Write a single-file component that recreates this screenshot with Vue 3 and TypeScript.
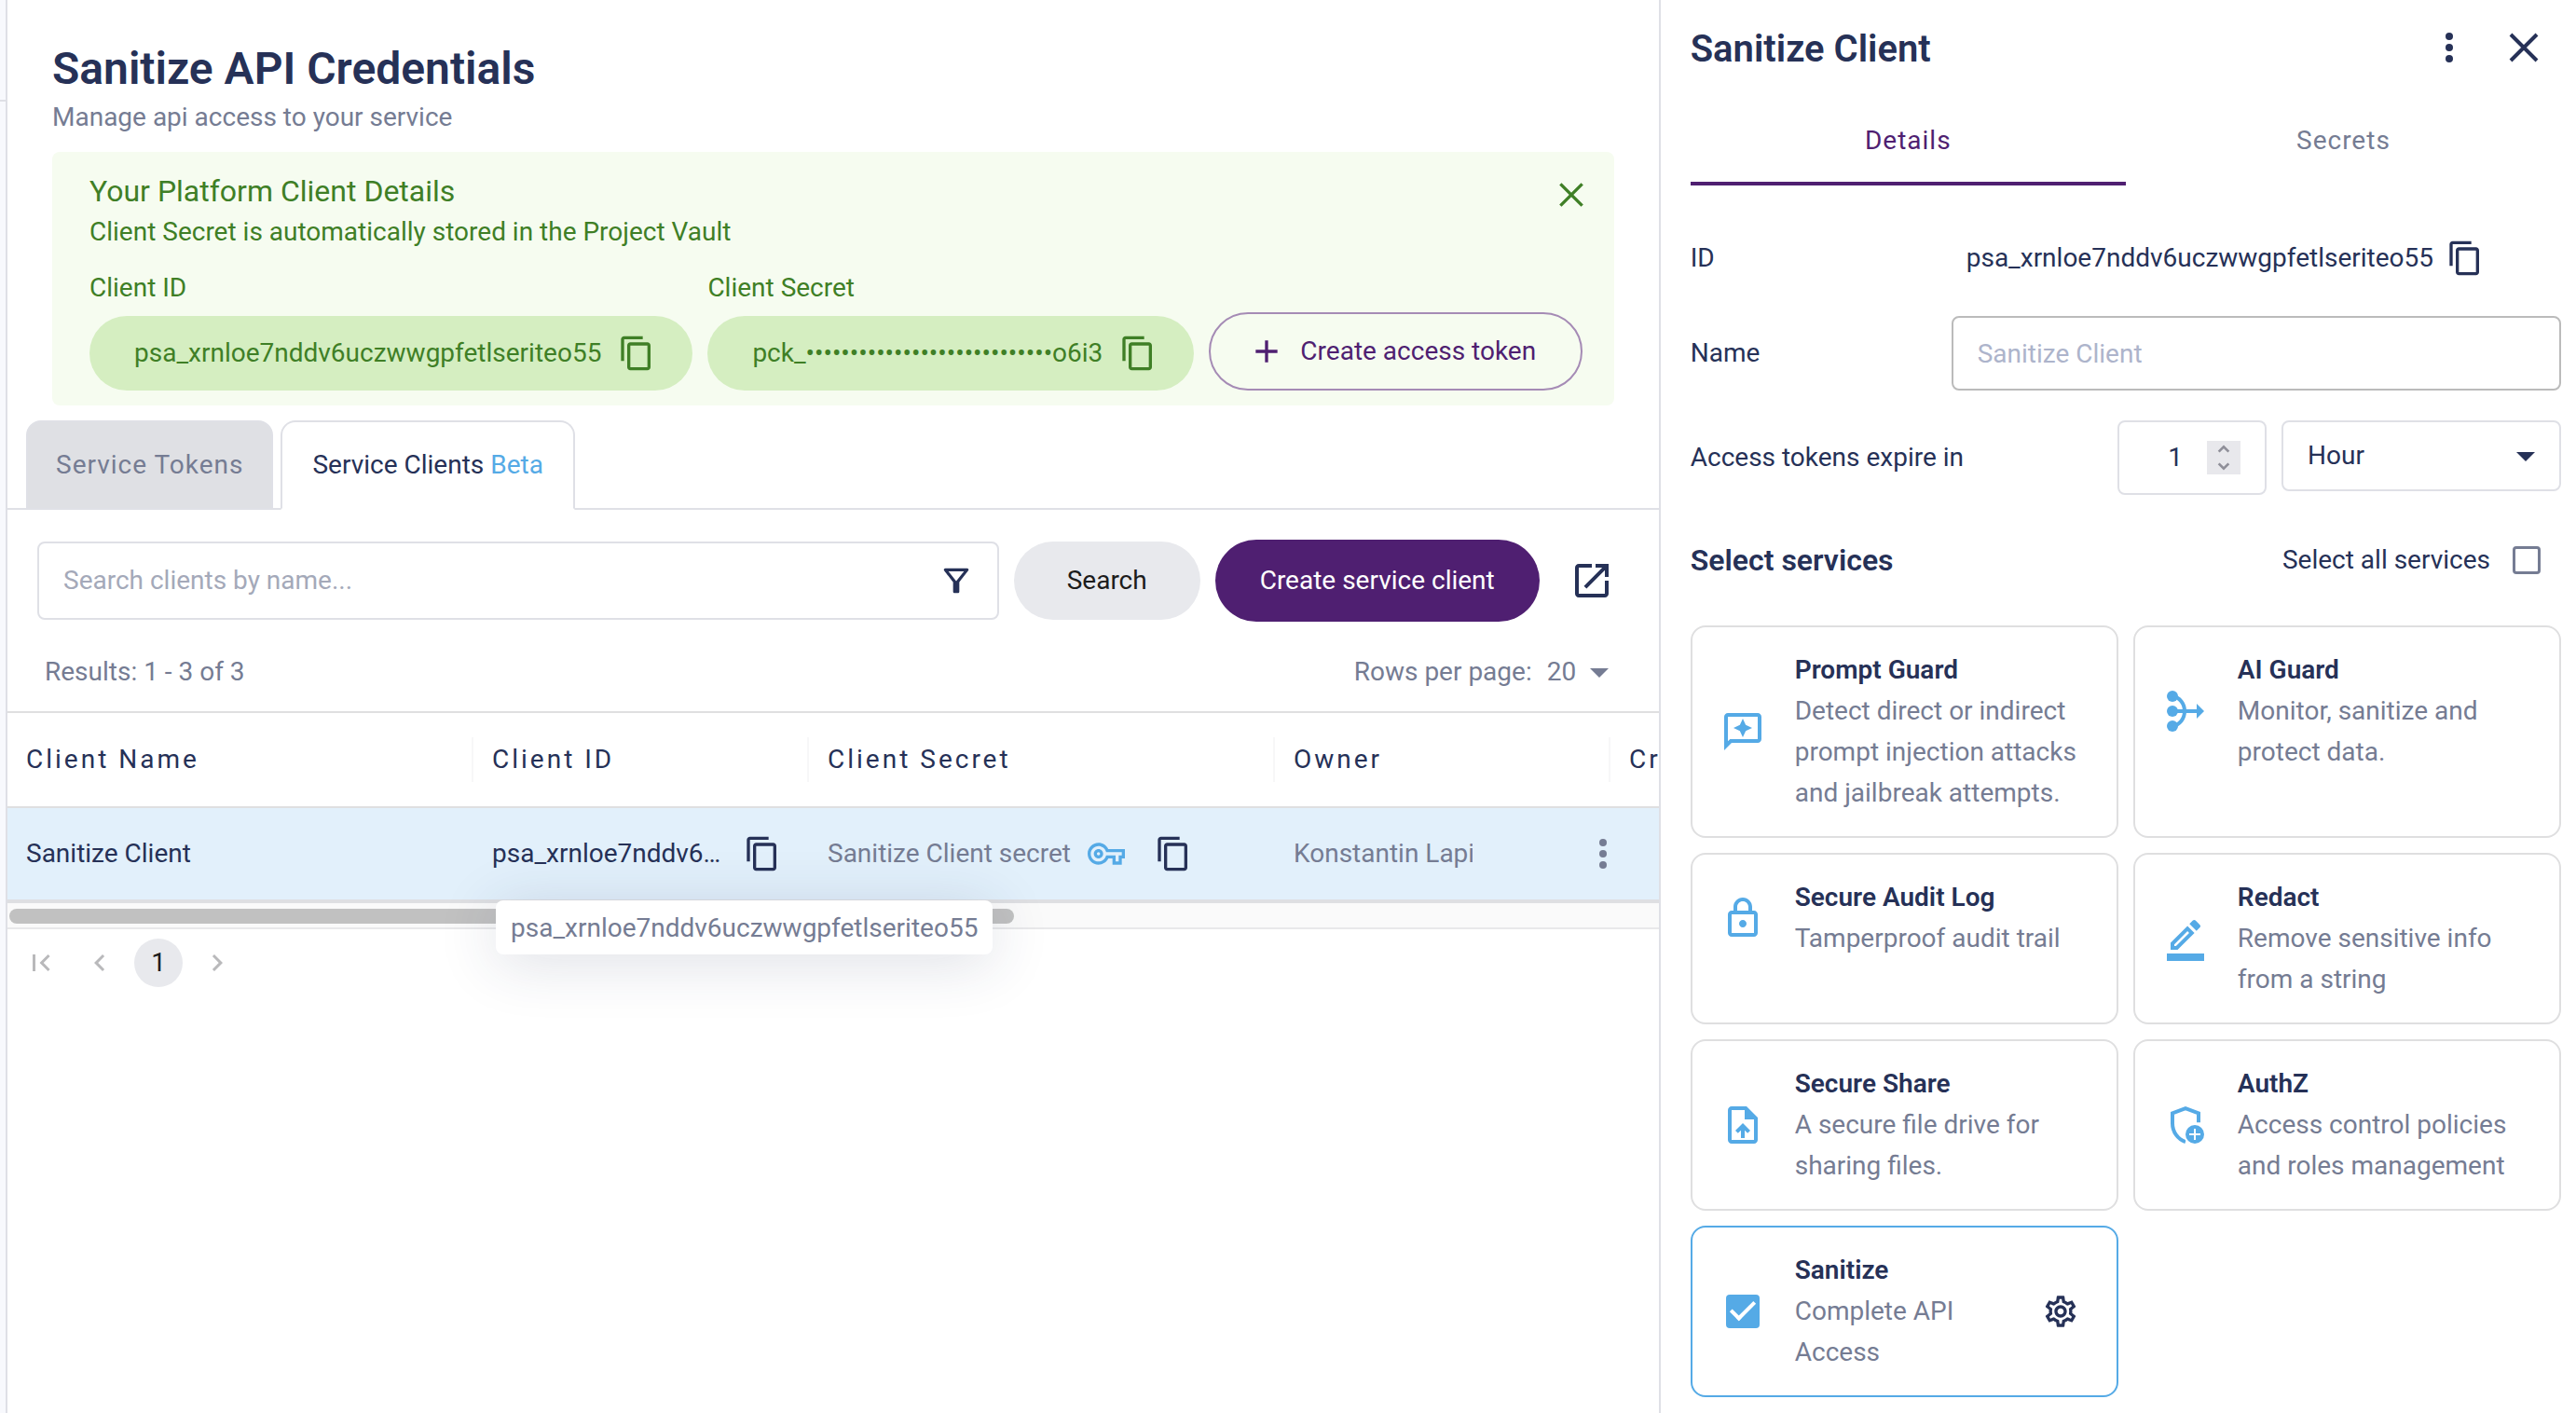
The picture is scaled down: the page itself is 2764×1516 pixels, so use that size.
<script setup lang="ts">
import { h, ref } from 'vue'
import type { FunctionalComponent } from 'vue'

const icons: Record<string, string> = {
  copy: '<path d="M16 1H4c-1.1 0-2 .9-2 2v14h2V3h12V1zm3 4H8c-1.1 0-2 .9-2 2v14c0 1.1.9 2 2 2h11c1.1 0 2-.9 2-2V7c0-1.1-.9-2-2-2zm0 16H8V7h11v14z"/>',
  close: '<path d="M5 5l14 14M19 5L5 19" fill="none" stroke="currentColor" stroke-width="2"/>',
  plus: '<path d="M12 5v14M5 12h14" fill="none" stroke="currentColor" stroke-width="2"/>',
  filter: '<path d="M7 6h10l-5.01 6.3L7 6zm-2.75-.39C6.27 8.2 10 13 10 13v6c0 .55.45 1 1 1h2c.55 0 1-.45 1-1v-6s3.72-4.8 5.74-7.39A.998.998 0 0 0 18.95 4H5.04c-.83 0-1.3.95-.79 1.61z"/>',
  external: '<path d="M19 19H5V5h7V3H5c-1.11 0-2 .9-2 2v14c0 1.1.89 2 2 2h14c1.1 0 2-.9 2-2v-7h-2v7zM14 3v2h3.59l-9.83 9.83 1.41 1.41L19 6.41V10h2V3h-7z"/>',
  key: '<path d="M22 19h-6v-4h-2.68c-1.14 2.42-3.6 4-6.32 4-3.86 0-7-3.14-7-7s3.14-7 7-7c2.72 0 5.17 1.58 6.32 4H24v6h-2v4zm-4-2h2v-4h2v-2H11.94l-.23-.67C11.01 8.34 9.11 7 7 7c-2.76 0-5 2.24-5 5s2.24 5 5 5c2.11 0 4.01-1.34 4.71-3.33l.23-.67H18v4zM7 15c-1.65 0-3-1.35-3-3s1.35-3 3-3 3 1.35 3 3-1.35 3-3 3zm0-4c-.55 0-1 .45-1 1s.45 1 1 1 1-.45 1-1-.45-1-1-1z"/>',
  dots: '<circle cx="12" cy="6" r="2"/><circle cx="12" cy="12" r="2"/><circle cx="12" cy="18" r="2"/>',
  caret: '<path d="M7 10l5 5 5-5z"/>',
  first: '<path d="M18.41 16.59L13.82 12l4.59-4.59L17 6l-6 6 6 6zM6 6h2v12H6z"/>',
  prev: '<path d="M15.41 7.41L14 6l-6 6 6 6 1.41-1.41L10.83 12z"/>',
  next: '<path d="M10 6L8.59 7.41 13.17 12l-4.58 4.59L10 18l6-6z"/>',
  up: '<path d="M4 16l8-8 8 8" fill="none" stroke="currentColor" stroke-width="4"/>',
  down: '<path d="M4 8l8 8 8-8" fill="none" stroke="currentColor" stroke-width="4"/>',
  prompt: '<path d="M20 2H4c-1.1 0-2 .9-2 2v18l4-4h14c1.1 0 2-.9 2-2V4c0-1.1-.9-2-2-2zm0 14H5.17L4 17.17V4h16v12z"/><path d="M12 15l1.57-3.43L17 10l-3.43-1.57L12 5l-1.57 3.43L7 10l3.43 1.57z"/>',
  merge: '<circle cx="5" cy="4" r="3"/><circle cx="5" cy="12" r="3"/><circle cx="5" cy="20" r="3"/><path d="M5 4c4 .6 6.5 4 6.5 8s-2.5 7.4-6.5 8M5 12h14" fill="none" stroke="currentColor" stroke-width="2"/><path d="M18 8l4 4-4 4z"/>',
  lock: '<path d="M18 8h-1V6c0-2.76-2.24-5-5-5S7 3.24 7 6v2H6c-1.1 0-2 .9-2 2v10c0 1.1.9 2 2 2h12c1.1 0 2-.9 2-2V10c0-1.1-.9-2-2-2zM9 6c0-1.66 1.34-3 3-3s3 1.34 3 3v2H9V6zm9 14H6V10h12v10zm-6-3c1.1 0 2-.9 2-2s-.9-2-2-2-2 .9-2 2 .9 2 2 2z"/>',
  redact: '<path d="M22 24H2v-4h20v4zM16.81 8.94l-3.75-3.75L4 14.25V18h3.75l9.06-9.06zM6 16v-.92l7.06-7.06.92.92L6.92 16H6zM19.71 6.04c.39-.39.39-1.02 0-1.41l-2.34-2.34c-.39-.39-1.02-.39-1.41 0l-1.83 1.83 3.75 3.75 1.83-1.83z"/>',
  file: '<path d="M14 2H6c-1.1 0-1.99.9-1.99 2L4 20c0 1.1.89 2 1.99 2H18c1.1 0 2-.9 2-2V8l-6-6zm4 18H6V4h7v5h5v11zM8 15.01l1.41 1.41L11 14.84V19h2v-4.16l1.59 1.59L16 15.01 12.01 11z"/>',
  shield: '<path d="M19 10.6V5.7L12 3.07 5 5.7v5.4c0 4.5 2.7 8.4 7 9.9" fill="none" stroke="currentColor" stroke-width="2"/><circle cx="17" cy="17" r="5.9" fill="#fff"/><circle cx="17" cy="17" r="5"/><path d="M17 14v6M14 17h6" stroke="#fff" stroke-width="1"/>',
  gear: '<path d="M19.43 12.98c.04-.32.07-.64.07-.98 0-.34-.03-.66-.07-.98l2.11-1.65c.19-.15.24-.42.12-.64l-2-3.46c-.09-.16-.26-.25-.44-.25-.06 0-.12.01-.17.03l-2.49 1c-.52-.4-1.08-.73-1.69-.98l-.38-2.65C14.46 2.18 14.25 2 14 2h-4c-.25 0-.46.18-.49.42l-.38 2.65c-.61.25-1.17.59-1.69.98l-2.49-1c-.06-.02-.12-.03-.18-.03-.17 0-.34.09-.43.25l-2 3.46c-.13.22-.07.49.12.64l2.11 1.65c-.04.32-.07.65-.07.98 0 .33.03.66.07.98l-2.11 1.65c-.19.15-.24.42-.12.64l2 3.46c.09.16.26.25.44.25.06 0 .12-.01.17-.03l2.49-1c.52.4 1.08.73 1.69.98l.38 2.65c.03.24.24.42.49.42h4c.25 0 .46-.18.49-.42l.38-2.65c.61-.25 1.17-.59 1.69-.98l2.49 1c.06.02.12.03.18.03.17 0 .34-.09.43-.25l2-3.46c.12-.22.07-.49-.12-.64l-2.11-1.65zm-1.98-1.71c.04.31.05.52.05.73 0 .21-.02.43-.05.73l-.14 1.13.89.7 1.08.84-.7 1.21-1.27-.51-1.04-.42-.9.68c-.43.32-.84.56-1.25.73l-1.06.43-.16 1.13-.2 1.35h-1.4l-.19-1.35-.16-1.13-1.06-.43c-.43-.18-.83-.41-1.23-.71l-.91-.7-1.06.43-1.27.51-.7-1.21 1.08-.84.89-.7-.14-1.13c-.03-.31-.05-.54-.05-.74s.02-.43.05-.73l.14-1.13-.89-.7-1.08-.84.7-1.21 1.27.51 1.04.42.9-.68c.43-.32.84-.56 1.25-.73l1.06-.43.16-1.13.2-1.35h1.39l.19 1.35.16 1.13 1.06.43c.43.18.83.41 1.23.71l.91.7 1.06-.43 1.27-.51.7 1.21-1.07.85-.89.7.14 1.13zM12 8c-2.21 0-4 1.79-4 4s1.79 4 4 4 4-1.79 4-4-1.79-4-4-4zm0 6c-1.1 0-2-.9-2-2s.9-2 2-2 2 .9 2 2-.9 2-2 2z"/>',
}

const Icon: FunctionalComponent<{ name: string; size?: number }> = (props) =>
  h('svg', {
    viewBox: '0 0 24 24',
    width: props.size ?? 40,
    height: props.size ?? 40,
    fill: 'currentColor',
    'aria-hidden': 'true',
    style: 'display:block;flex:none',
    innerHTML: icons[props.name],
  })
Icon.props = ['name', 'size']

const clientId = 'psa_xrnloe7nddv6uczwwgpfetlseriteo55'
const maskedSecret = 'pck_' + '•'.repeat(28) + 'o6i3'

const search = ref('')
const clientName = ref('')
const expiry = ref(1)
const unit = ref('Hour')
const pageSize = ref('20')
const allServices = ref(false)
const sanitizeOn = ref(true)

const services = [
  { icon: 'prompt', title: 'Prompt Guard', text: 'Detect direct or indirect prompt injection attacks and jailbreak attempts.' },
  { icon: 'merge', title: 'AI Guard', text: 'Monitor, sanitize and protect data.' },
  { icon: 'lock', title: 'Secure Audit Log', text: 'Tamperproof audit trail' },
  { icon: 'redact', title: 'Redact', text: 'Remove sensitive info from a string' },
  { icon: 'file', title: 'Secure Share', text: 'A secure file drive for sharing files.' },
  { icon: 'shield', title: 'AuthZ', text: 'Access control policies and roles management' },
]
</script>

<template>
  <div class="app">
    <div class="rail"><div class="rail-head"></div></div>

    <main class="main">
      <header class="intro">
        <h1>Sanitize API Credentials</h1>
        <p>Manage api access to your service</p>
      </header>

      <section class="banner">
        <div class="banner-top">
          <div>
            <h2>Your Platform Client Details</h2>
            <p>Client Secret is automatically stored in the Project Vault</p>
          </div>
          <button class="icon-btn" aria-label="Dismiss"><Icon name="close" /></button>
        </div>
        <div class="creds">
          <div>
            <div class="cred-label">Client ID</div>
            <div class="pill"><span>{{ clientId }}</span><button class="icon-btn" aria-label="Copy client ID"><Icon name="copy" /></button></div>
          </div>
          <div>
            <div class="cred-label">Client Secret</div>
            <div class="pill"><span>{{ maskedSecret }}</span><button class="icon-btn" aria-label="Copy client secret"><Icon name="copy" /></button></div>
          </div>
          <button class="outline-btn"><Icon name="plus" />Create access token</button>
        </div>
      </section>

      <nav class="tabs">
        <button class="tab">Service Tokens</button>
        <button class="tab active">Service Clients <span>Beta</span></button>
      </nav>

      <div class="toolbar">
        <div class="search">
          <input v-model="search" type="text" placeholder="Search clients by name..." aria-label="Search clients by name" />
          <button class="icon-btn" aria-label="Filter"><Icon name="filter" /></button>
        </div>
        <button class="search-btn">Search</button>
        <button class="primary-btn">Create service client</button>
        <button class="icon-btn external" aria-label="Open in new window"><Icon name="external" :size="48" /></button>
      </div>

      <div class="results">
        <span>Results: 1 - 3 of 3</span>
        <label class="rows">Rows per page:
          <span class="rows-select">
            <select v-model="pageSize"><option>20</option><option>50</option></select>
            <Icon name="caret" :size="48" />
          </span>
        </label>
      </div>

      <div class="grid">
        <table>
          <colgroup><col class="w-l" /><col class="w-s" /><col class="w-l" /><col class="w-s" /><col class="w-s" /></colgroup>
          <thead>
            <tr>
              <th><div>Client Name</div></th>
              <th><div>Client ID</div></th>
              <th><div>Client Secret</div></th>
              <th><div>Owner</div></th>
              <th><div>Created At</div></th>
            </tr>
          </thead>
          <tbody>
            <tr>
              <td class="strong">Sanitize Client</td>
              <td class="strong">
                <div class="cell">
                  <span class="id">{{ clientId }}</span>
                  <button class="icon-btn" aria-label="Copy client ID"><Icon name="copy" /></button>
                </div>
                <div class="tooltip" role="tooltip">{{ clientId }}</div>
              </td>
              <td>
                <div class="cell secret">
                  <span>Sanitize Client secret</span>
                  <Icon name="key" class="key" />
                  <button class="icon-btn" aria-label="Copy client secret"><Icon name="copy" /></button>
                </div>
              </td>
              <td>
                <div class="cell owner">
                  <span>Konstantin Lapin</span>
                  <button class="icon-btn" aria-label="Row actions"><Icon name="dots" :size="48" /></button>
                </div>
              </td>
              <td></td>
            </tr>
          </tbody>
        </table>
      </div>
      <div class="scroll"><div class="thumb"></div></div>

      <nav class="pager" aria-label="Pagination">
        <button aria-label="First page"><Icon name="first" :size="36" /></button>
        <button aria-label="Previous page"><Icon name="prev" :size="36" /></button>
        <button class="current">1</button>
        <button aria-label="Next page"><Icon name="next" :size="36" /></button>
      </nav>
    </main>

    <aside class="panel">
      <header class="panel-head">
        <h2>Sanitize Client</h2>
        <button class="icon-btn" aria-label="More"><Icon name="dots" :size="48" /></button>
        <button class="icon-btn" aria-label="Close"><Icon name="close" :size="48" /></button>
      </header>
      <nav class="panel-tabs">
        <button class="active">Details</button>
        <button>Secrets</button>
      </nav>

      <div class="field">
        <span>ID</span>
        <div class="id-value"><span>{{ clientId }}</span><button class="icon-btn" aria-label="Copy ID"><Icon name="copy" /></button></div>
      </div>
      <div class="field">
        <label for="name">Name</label>
        <input id="name" v-model="clientName" class="box name" type="text" placeholder="Sanitize Client" />
      </div>
      <div class="field expiry">
        <label for="expiry">Access tokens expire in</label>
        <div class="box number">
          <input id="expiry" v-model="expiry" type="number" />
          <span class="spin">
            <button aria-label="Increase" @click="expiry++"><Icon name="up" :size="16" /></button>
            <button aria-label="Decrease" @click="expiry--"><Icon name="down" :size="16" /></button>
          </span>
        </div>
        <div class="box unit">
          <select v-model="unit" aria-label="Expiry unit"><option>Hour</option><option>Day</option></select>
          <Icon name="caret" :size="48" />
        </div>
      </div>

      <div class="services-head">
        <h3>Select services</h3>
        <label for="all">Select all services</label>
        <input id="all" v-model="allServices" type="checkbox" class="check" />
      </div>

      <div class="cards">
        <article v-for="s in services" :key="s.title" class="card">
          <div class="card-row">
            <Icon :name="s.icon" :size="48" class="card-icon" />
            <div class="card-text"><h4>{{ s.title }}</h4><p>{{ s.text }}</p></div>
          </div>
        </article>
        <article class="card selected">
          <div class="card-row">
            <input id="sanitize" v-model="sanitizeOn" type="checkbox" class="check filled" />
            <label for="sanitize" class="card-text"><strong>Sanitize</strong><span>Complete API Access</span></label>
            <button class="icon-btn gear" aria-label="Sanitize settings"><Icon name="gear" /></button>
          </div>
        </article>
      </div>
    </aside>
  </div>
</template>

<style>
body { margin: 0; background: #fff; }
</style>

<style scoped>
.app {
  --navy: #263157;
  --gray: #757c93;
  --line: #dfe0e6;
  --card-line: #dfdfe0;
  --blue: #55aae6;
  --purple: #4f1f71;
  --green: #3f7f26;
  display: grid;
  grid-template-columns: 8px minmax(0, 9fr) minmax(0, 5fr);
  min-height: 100vh;
  font-family: Roboto, "Liberation Sans", sans-serif;
  font-size: 28px;
  line-height: 44px;
  color: var(--navy);
}
.app * { box-sizing: border-box; }
h1, h2, h3, h4, p { margin: 0; }
button, input, select { font: inherit; color: inherit; margin: 0; }
button { border: 0; background: none; padding: 0; cursor: pointer; white-space: nowrap; }
select { appearance: none; border: 0; background: none; padding: 0; outline: 0; }
input { outline: 0; }
input::placeholder { color: #a4a9b9; opacity: 1; }
.icon-btn { flex: none; display: flex; align-items: center; justify-content: center; }

.rail { background: #f8f9fd; border-right: 2px solid var(--line); }
.rail-head { height: 109px; border-bottom: 2px solid var(--line); }
.main { min-width: 0; display: flex; flex-direction: column; }

.intro { padding: 46px 48px 17px; }
h1 { font-size: 48px; line-height: 56px; font-weight: 600; }
.intro p { margin-top: 4px; line-height: 40px; color: var(--gray); }

.banner { margin: 0 48px; padding: 20px 40px 16px; background: #f6fcf0; border-radius: 8px; color: var(--green); }
.banner-top { display: flex; justify-content: space-between; }
.banner h2 { font-size: 32px; font-weight: 400; }
.banner-top .icon-btn { width: 52px; height: 52px; margin-right: -20px; }
.creds { display: flex; align-items: flex-end; gap: 16px; margin-top: 16px; }
.cred-label { margin-bottom: 8px; }
.pill { height: 80px; display: flex; align-items: center; gap: 18px; padding: 0 40px 0 48px; border-radius: 40px; background: #d5eec1; white-space: nowrap; }
.outline-btn { height: 84px; display: flex; align-items: center; gap: 16px; padding: 0 48px 0 40px; border: 2px solid #a58bb5; border-radius: 42px; color: var(--purple); }

.tabs { display: flex; gap: 8px; margin-top: 16px; padding-left: 20px; box-shadow: inset 0 -2px var(--line); }
.tab { height: 96px; padding: 0 30px; border: 2px solid var(--line); border-radius: 16px 16px 0 0; background: #dfe0e4; color: var(--gray); letter-spacing: 1px; }
.tab.active { padding: 0 32px; background: #fff; border-bottom-color: #fff; color: var(--navy); letter-spacing: 0; }
.tab span { color: var(--blue); }

.toolbar { display: flex; align-items: center; gap: 16px; margin-top: 32px; padding: 0 48px 0 32px; }
.search { flex: 1; min-width: 0; height: 84px; display: flex; align-items: center; padding: 0 24px 0 26px; border: 2px solid var(--line); border-radius: 8px; }
.search input { flex: 1; min-width: 0; border: 0; padding: 0; background: none; }
.search-btn { height: 84px; width: 200px; border-radius: 42px; background: #e8e9ed; color: #1c1c1c; }
.primary-btn { height: 88px; width: 348px; border-radius: 44px; background: var(--purple); color: #fff; }
.external { margin-left: 16px; }

.results { display: flex; justify-content: space-between; margin: 32px 40px 20px; color: var(--gray); }
.rows { display: flex; gap: 16px; }
.rows-select { display: flex; align-items: center; height: 44px; }
.rows-select select { width: 32px; }

.grid { overflow-x: clip; }
table { width: 2080px; table-layout: fixed; border-collapse: separate; border-spacing: 0; }
.w-l { width: 500px; }
.w-s { width: 360px; }
th { height: 104px; padding: 0; border: solid var(--card-line); border-width: 2px 0; text-align: left; font-weight: 400; letter-spacing: 3px; }
th div { padding-left: 20px; line-height: 48px; border-right: 2px solid #f7f7f8; }
td { position: relative; height: 102px; padding: 0 20px; background: #e2f0fb; border-bottom: 4px solid #dedfe2; color: var(--gray); white-space: nowrap; }
td.strong { color: var(--navy); }
.cell { display: flex; align-items: center; }
.id { width: 252px; margin-right: 18px; overflow: hidden; text-overflow: ellipsis; }
.key { margin: 0 32px 0 18px; color: var(--blue); }
.secret .icon-btn { color: var(--navy); }
.owner { justify-content: space-between; margin-right: -36px; }
.owner span { width: 192px; overflow: hidden; }
.tooltip { position: absolute; z-index: 2; left: 24px; top: 99px; padding: 8px 16px 6px; border-radius: 8px; background: #fff; color: var(--gray); box-shadow: 0 8px 64px rgba(39, 49, 87, .16); }
.scroll { height: 28px; padding: 6px 2px; background: #fafafa; border-bottom: 2px solid #e8e8ea; }
.thumb { width: 61%; height: 16px; border-radius: 8px; background: #c1c1c1; }

.pager { display: flex; align-items: center; gap: 11px; padding: 10px; color: #b9b9bb; }
.pager button { width: 52px; height: 52px; display: flex; align-items: center; justify-content: center; }
.pager .current { border-radius: 26px; background: #e8e9ed; color: #1c1c1c; }

.panel { min-width: 0; padding: 0 16px 16px 32px; border-left: 2px solid var(--line); }
.panel-head { height: 102px; display: flex; align-items: center; gap: 32px; padding-right: 16px; }
.panel-head h2 { flex: 1; padding-top: 4px; font-size: 40px; font-weight: 600; }
.panel-tabs { display: flex; }
.panel-tabs button { flex: 1; height: 97px; padding-top: 4px; border-bottom: 4px solid transparent; color: var(--gray); letter-spacing: 1px; }
.panel-tabs .active { color: var(--purple); border-color: var(--purple); }

.field { display: grid; grid-template-columns: 280px minmax(0, 1fr); align-items: center; margin-top: 32px; }
.panel-tabs + .field { margin: 56px 0 40px; }
.id-value { display: flex; align-items: center; gap: 14px; padding-left: 16px; }
.box { height: 80px; border: 2px solid var(--line); border-radius: 8px; background: #fff; }
.name { width: 100%; padding: 0 26px; border-color: #bbb; }
.name::placeholder { color: #adb4cb; }
.expiry { grid-template-columns: minmax(0, 1fr) 160px 300px; column-gap: 16px; }
.number { display: flex; align-items: center; justify-content: flex-end; gap: 26px; padding-right: 26px; }
.number input { width: 48px; border: 0; padding: 0; text-align: right; appearance: textfield; }
.number input::-webkit-inner-spin-button { appearance: none; margin: 0; }
.spin { width: 36px; height: 36px; display: flex; flex-direction: column; background: #e8e8ec; color: #8f8f99; }
.spin button { height: 18px; display: flex; align-items: center; justify-content: center; }
.unit { height: 76px; align-self: start; display: flex; align-items: center; padding: 0 12px 0 26px; }
.unit select { flex: 1; height: 72px; }

.services-head { display: flex; align-items: center; margin: 48px 22px 48px 0; }
.services-head h3 { flex: 1; font-size: 32px; font-weight: 600; }
.check { appearance: none; flex: none; width: 30px; height: 30px; margin-left: 24px; border: 3px solid var(--gray); border-radius: 4px; background: #fff; }
.cards { display: grid; grid-template-columns: repeat(2, minmax(0, 1fr)); gap: 16px; }
.card { padding: 24px 30px; border: 2px solid var(--card-line); border-radius: 16px; }
.card-row { display: flex; align-items: center; gap: 32px; }
.card-icon { color: var(--blue); }
.card-text { flex: 1; min-width: 0; color: var(--gray); }
.card-text h4, .card-text strong { display: block; font-size: 28px; font-weight: 600; color: var(--navy); }
.card-text span { display: block; }
.selected { border-color: var(--blue); }
.check.filled { width: 36px; height: 36px; margin: 0 6px; border: 0; background: var(--blue); display: grid; place-items: center; }
.check.filled::before { content: ""; width: 22px; height: 10px; margin-top: -8px; border: solid #fff; border-width: 0 0 4px 4px; transform: rotate(-45deg); }
.gear { margin-right: 10px; }
</style>
